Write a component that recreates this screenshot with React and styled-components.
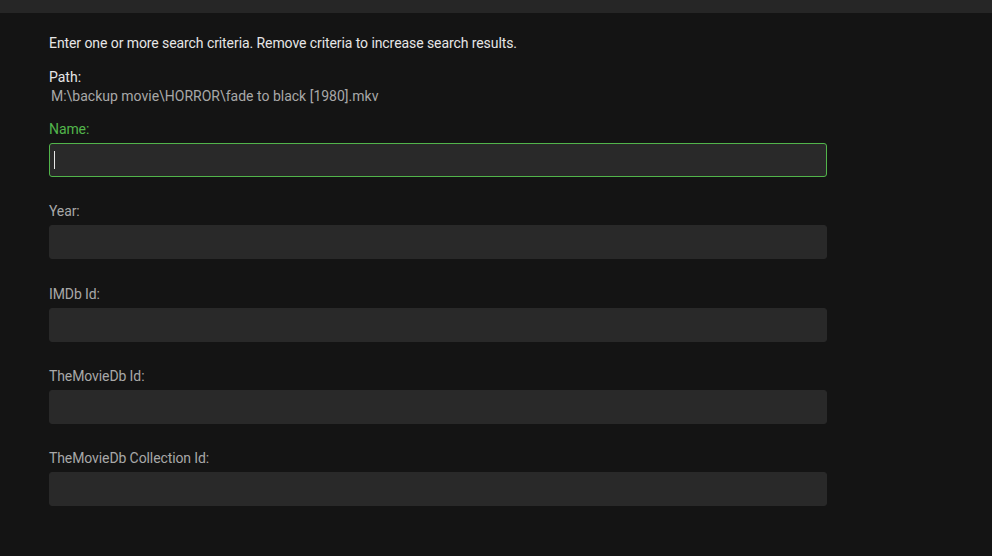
import React from "react";
import styled, { createGlobalStyle } from "styled-components";

const Global = createGlobalStyle`
  html, body { margin: 0; padding: 0; background: #141414; }
  body { font-family: Roboto, "Noto Sans", "Liberation Sans", sans-serif; }
  * { box-sizing: border-box; }
`;

const Page = styled.div`
  width: 992px;
  height: 556px;
  background: #141414;
  overflow: hidden;
  display: flex;
  flex-direction: column;
`;

const TopBar = styled.div`
  height: 13px;
  background: #262626;
  flex: none;
`;

const Content = styled.div`
  padding: 22px 0 0 49px;
  width: 827px;
  display: flex;
  flex-direction: column;
`;

const Intro = styled.p`
  margin: 0;
  font-size: 14px;
  line-height: 17px;
  letter-spacing: -0.08px;
  color: #e6e6e6;
`;

const PathBlock = styled.div`
  margin-top: 17px;
  display: flex;
  flex-direction: column;
`;

const PathLabel = styled.div`
  font-size: 14px;
  line-height: 17px;
  color: #e6e6e6;
`;

const PathValue = styled.div`
  font-size: 14px;
  line-height: 17px;
  color: #a8a8a8;
  margin-top: 2px;
  padding-left: 2px;
`;

const Field = styled.div`
  margin-top: ${(p) => p.$gap}px;
  display: flex;
  flex-direction: column;
`;

const Label = styled.label`
  font-size: 14px;
  line-height: 17px;
  letter-spacing: -0.1px;
  color: ${(p) => (p.$focused ? "#52b54b" : "#a8a8a8")};
  margin-bottom: 5px;
`;

const Input = styled.input`
  height: 34px;
  width: 100%;
  background: #292929;
  border: 1px solid ${(p) => (p.$focused ? "#52b54b" : "#292929")};
  border-radius: 3px;
  outline: none;
  color: #e6e6e6;
  font-family: inherit;
  font-size: 14px;
  padding: 0 4px;
  caret-color: #e6e6e6;
`;

const Caret = styled.span`
  position: absolute;
  left: 5px;
  top: 8px;
  width: 1px;
  height: 18px;
  background: #e6e6e6;
`;

const InputWrap = styled.div`
  position: relative;
`;

const fields = [
  { label: "Name:", focused: true, gap: 16 },
  { label: "Year:", gap: 26 },
  { label: "IMDb Id:", gap: 27 },
  { label: "TheMovieDb Id:", gap: 26 },
  { label: "TheMovieDb Collection Id:", gap: 26 },
];

export default function App() {
  return (
    <>
      <Global />
      <Page>
        <TopBar />
        <Content>
          <Intro>Enter one or more search criteria. Remove criteria to increase search results.</Intro>
          <PathBlock>
            <PathLabel>Path:</PathLabel>
            <PathValue>M:\backup movie\HORROR\fade to black [1980].mkv</PathValue>
          </PathBlock>
          {fields.map((f) => (
            <Field key={f.label} $gap={f.gap}>
              <Label $focused={f.focused}>{f.label}</Label>
              <InputWrap>
                <Input $focused={f.focused} readOnly />
                {f.focused && <Caret />}
              </InputWrap>
            </Field>
          ))}
        </Content>
      </Page>
    </>
  );
}
